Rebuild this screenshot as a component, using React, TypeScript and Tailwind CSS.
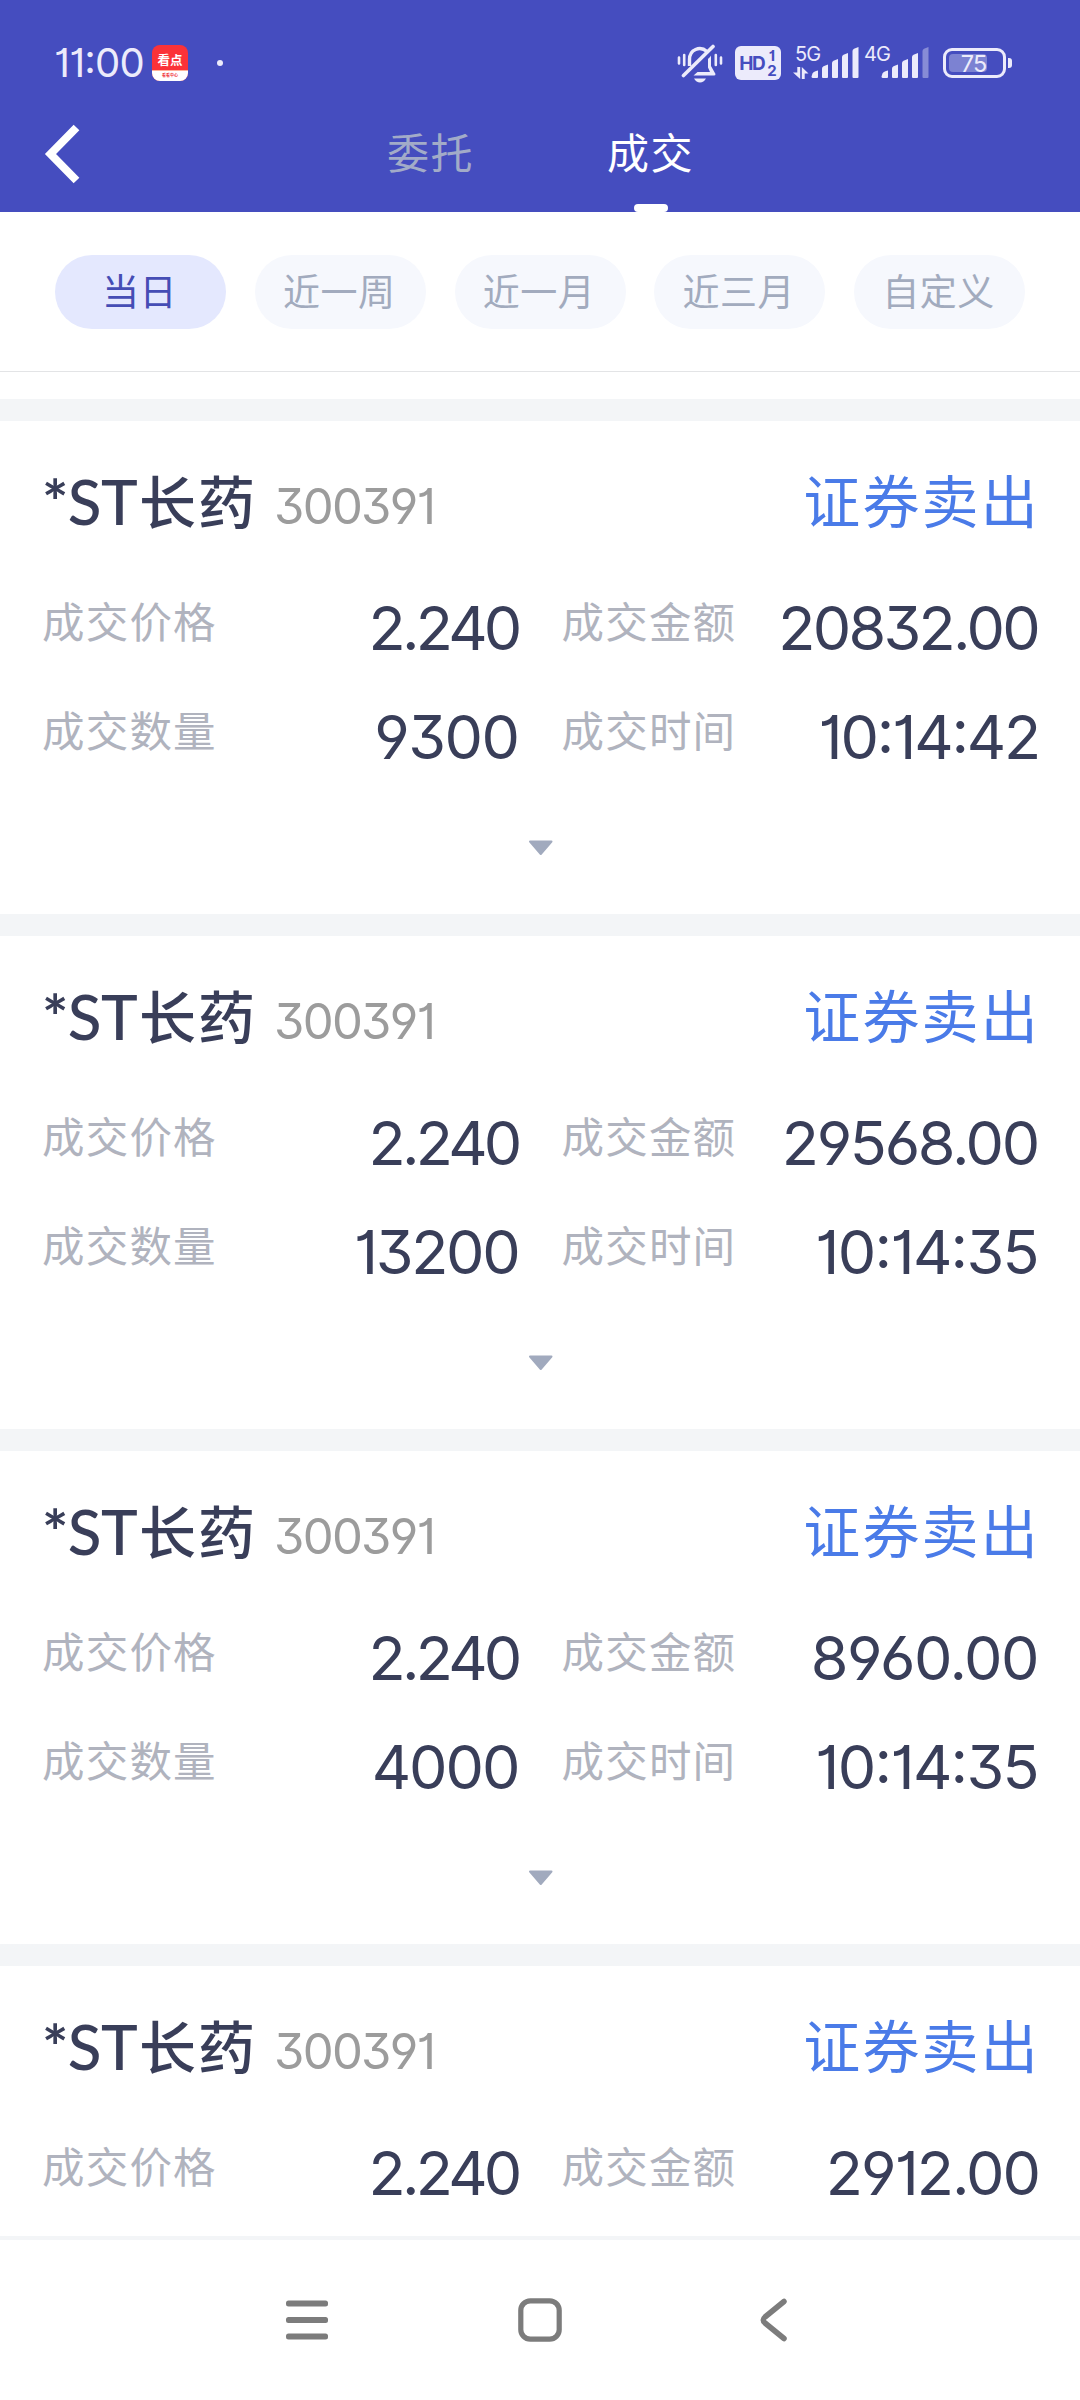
import React from "react";

const NUM =
  "font-['Inter','Noto_Sans_CJK_SC',sans-serif] [font-feature-settings:'cv01','cv03','cv04','cv09','calt']";

interface FieldData {
  label: string;
  value: string;
  tracking: string;
}

const price: FieldData = { label: "成交价格", value: "2.240", tracking: "tracking-[-3.800px] mr-[-1px]" };

const trades: FieldData[][] = [
  [
    price,
    { label: "成交金额", value: "20832.00", tracking: "tracking-[-2.700px] mr-[-1px]" },
    { label: "成交数量", value: "9300", tracking: "tracking-[-1.500px] mr-[-1px]" },
    { label: "成交时间", value: "10:14:42", tracking: "tracking-[-2.200px] mr-[-2px]" },
  ],
  [
    price,
    { label: "成交金额", value: "29568.00", tracking: "tracking-[-2.300px] mr-[-1px]" },
    { label: "成交数量", value: "13200", tracking: "tracking-[-2.300px] mr-[-1px]" },
    { label: "成交时间", value: "10:14:35", tracking: "tracking-[-1.700px] mr-[-1px]" },
  ],
  [
    price,
    { label: "成交金额", value: "8960.00", tracking: "tracking-[-1.500px] mr-[-1px]" },
    { label: "成交数量", value: "4000", tracking: "tracking-[-2px] mr-[-1px]" },
    { label: "成交时间", value: "10:14:35", tracking: "tracking-[-1.700px] mr-[-1px]" },
  ],
  [price, { label: "成交金额", value: "2912.00", tracking: "tracking-[-2px] mr-[-2px]" }],
];

const ranges = ["当日", "近一周", "近一月", "近三月", "自定义"];

function MutedBell() {
  return (
    <svg width="46" height="40" viewBox="0 0 46 40" fill="none" stroke="#ecebfb" className="block">
      <path d="M12.500 22V15.500C12.500 5.500 23 1.500 30 7.500" strokeWidth="3.400" />
      <path d="M31 15q2.500-2.500 3-3.500v10.500L38.500 30q0 1.600-1.500 1.600H16.500l4-3.600H33L31 23.500z" fill="#ecebfb" stroke="none" />
      <path d="M36 2.500L6.500 31.500" strokeWidth="3.600" strokeLinecap="round" />
      <path d="M17 34.500h12c-1.500 2.800-3.500 4-6 4s-4.500-1.200-6-4z" fill="#ecebfb" stroke="none" />
      <path d="M2 13.500v6M7.200 11v10M38.800 11v10M44 13.500v6" strokeWidth="2.600" strokeLinecap="round" />
    </svg>
  );
}

function Bars({ dim }: { dim?: boolean }) {
  return (
    <svg width="49" height="32" viewBox="0 0 49 32" fill="#ecebfb" className="block">
      <path d="M1.500 26.500q1-2 5.500-3V30q0 1-1 1H2q-1.500 0-1.500-1.500z" />
      <path d="M11 21.500q0-1.500 1.500-2.200L17 17.500V30q0 1-1 1h-4q-1 0-1-1z" />
      <path d="M21 16q0-1.500 1.500-2.200L27 12V30q0 1-1 1h-4q-1 0-1-1z" />
      <path d="M31 10q0-1.500 1.500-2.200L37 6V30q0 1-1 1h-4q-1 0-1-1z" />
      <path d="M41.500 4q0-1.500 1.500-2.200L47.500 0V30q0 1-1 1h-4q-1 0-1-1z" opacity={dim ? 0.4 : 1} />
    </svg>
  );
}

function StatusBar() {
  return (
    <div className="flex h-[102px] items-start pl-[54px] pr-[68px] pt-[42px] text-[#ecebfb]">
      <span className={`${NUM} mt-[1px] w-[98px] whitespace-nowrap text-[40px] leading-[40px] tracking-[-0.800px]`}>11:00</span>
      <div className="mt-[3px] flex h-[36px] w-[36px] flex-col overflow-hidden rounded-[8px] bg-[#fb3238]">
        <span className="h-[25px] pt-[8px] text-center font-['Noto_Sans_CJK_SC',sans-serif] text-[12.500px] font-bold leading-[14px] text-white">看点</span>
        <span className="h-[11px] border-t border-[#ffb199] bg-white text-center font-['Noto_Sans_CJK_SC',sans-serif] text-[4px] font-bold leading-[9px] text-[#f0353a]">看看中心</span>
      </div>
      <div className="ml-[29px] mt-[18px] h-[6px] w-[6px] rounded-full bg-[#ecebfb]" />
      <div className="ml-auto flex items-start">
        <div className="mt-[2px]">
          <MutedBell />
        </div>
        <div className={`${NUM} ml-[12px] mt-[4px] flex h-[34px] w-[46px] items-center justify-center gap-[3px] rounded-[6px] bg-[#ecebfb] font-bold text-[#454dbf]`}>
          <span className="text-[19px] leading-none tracking-[-1.500px]">HD</span>
          <span className="flex flex-col items-center text-[15px] leading-[15px]">
            <span>1</span>
            <span>2</span>
          </span>
        </div>
        <div className={`${NUM} relative ml-[13px] mt-[5px] h-[32px] w-[68px]`}>
          <span className="absolute left-[1px] top-[-4px] text-[20px] leading-[22px] tracking-[-1px]">5G</span>
          <svg width="17" height="12" viewBox="0 0 17 12" fill="#ecebfb" className="absolute left-[-1px] top-[20px]">
            <path d="M4.300 0H7.200V12L0 5.500H4.300z" />
            <path d="M8.800 12V0L15.500 6.500H11.700V12z" />
          </svg>
          <div className="absolute left-[17px] top-0">
            <Bars />
          </div>
        </div>
        <div className={`${NUM} relative ml-[3px] mt-[5px] h-[32px] w-[67px]`}>
          <span className="absolute left-[-1px] top-[-4px] text-[20px] leading-[22px] tracking-[-1px]">4G</span>
          <div className="absolute left-[16px] top-0">
            <Bars dim />
          </div>
        </div>
        <div className="relative ml-[11px] mt-[6px] flex h-[30px] w-[63px] items-center justify-center rounded-[9px] border-[3px] border-[#ecebfb]">
          <div className="absolute left-[3px] top-[3px] h-[18px] w-[38px] rounded-[4px] bg-[#7c82d2]" />
          <span className={`${NUM} relative mr-[2px] mt-px text-[23.500px] leading-none tracking-[-1px]`}>75</span>
        </div>
        <div className="ml-[2px] mt-[16px] h-[10px] w-[4px] rounded-r-[3px] bg-[#ecebfb]" />
      </div>
    </div>
  );
}

function Tabs() {
  return (
    <div className="flex h-[110px] items-start text-[42px] leading-[60px] tracking-[1.500px]">
      <svg width="40" height="64" viewBox="0 0 40 64" fill="none" stroke="#fff" strokeWidth="8" className="ml-[43px] mt-[20px]">
        <path d="M33.500 5.500L7.500 32L33.500 58.500" />
      </svg>
      <span className="ml-[304px] mt-[19px] text-[#a2abc8]">委托</span>
      <div className="ml-[133px] flex h-full flex-col items-center pt-[19px] text-white">
        <span>成交</span>
        <div className="mt-auto h-[8px] w-[34px] rounded-[4px] bg-white" />
      </div>
    </div>
  );
}

function Ranges() {
  return (
    <div className="flex h-[160px] justify-between border-b border-[#e3e4e6] bg-white pl-[55px] pr-[55px] pt-[43px]">
      {ranges.map((r, i) => (
        <div
          key={r}
          className={
            "flex h-[74px] w-[171px] items-center justify-center rounded-full pb-[3px] pr-[2px] text-[37px] tracking-[0.500px] " +
            (i === 0 ? "bg-[#e4e8fe] text-[#454db5]" : "bg-[#f6f8fd] text-[#a2abbe]")
          }
        >
          {r}
        </div>
      ))}
    </div>
  );
}

function Field({ label, value, tracking }: FieldData) {
  return (
    <div className="flex h-[109px] items-start justify-between">
      <span className="text-[42.500px] leading-[60px] tracking-[1.200px] text-[#b0b3be]">{label}</span>
      <span className={`${NUM} ${tracking} mt-[8px] text-[61px] leading-[60px] text-[#393e59]`}>{value}</span>
    </div>
  );
}

function TradeCard({ fields }: { fields: FieldData[] }) {
  return (
    <section className="h-[515px] shrink-0 border-t-[22px] border-[#f3f5f7] bg-white pl-[42px] pr-[43px]">
      <div className="flex h-[169px] items-start pt-[50px] leading-[60px]">
        <h2 className="flex font-medium text-[#393e59]">
          <span className="w-[97px] whitespace-nowrap font-['Lato',sans-serif] text-[62px] tracking-[-0.500px]">
            <span className="font-bold">*</span>ST
          </span>
          <span className="mt-[-2px] text-[57px] tracking-[2px]">长药</span>
        </h2>
        <span className={`${NUM} ml-[17px] mt-[6px] text-[49px] tracking-[-1.700px] text-[#9c9c9c]`}>300391</span>
        <span className="ml-auto mr-[-3px] mt-[-3px] text-[57px] tracking-[2.200px] text-[#4a7be8]">证券卖出</span>
      </div>
      <div className="grid grid-cols-2 gap-x-[44px]">
        {fields.map((f) => (
          <Field key={f.label} {...f} />
        ))}
      </div>
      <svg width="28" height="18" viewBox="0 0 28 18" className="mx-auto mt-[31px] block">
        <path d="M4 2.500H25.500L14.750 15z" fill="#a1aabe" stroke="#a1aabe" strokeWidth="2" strokeLinejoin="round" />
      </svg>
    </section>
  );
}

function NavBar() {
  return (
    <nav className="flex h-[164px] shrink-0 items-start border-t-4 border-[#f3f5f7] bg-white pt-[54px]">
      <svg width="52" height="52" viewBox="0 0 52 52" fill="#7c7c7c" className="ml-[281px]">
        <rect x="5" y="6.500" width="42" height="6" rx="2.500" />
        <rect x="5" y="23" width="42" height="6" rx="2.500" />
        <rect x="5" y="39.500" width="42" height="6" rx="2.500" />
      </svg>
      <svg width="52" height="52" viewBox="0 0 52 52" fill="none" stroke="#7c7c7c" strokeWidth="5.200" className="ml-[181px]">
        <rect x="6.800" y="6.800" width="38.400" height="38.400" rx="9.500" />
      </svg>
      <svg width="52" height="52" viewBox="0 0 52 52" fill="none" stroke="#7c7c7c" strokeWidth="5.500" strokeLinecap="round" strokeLinejoin="round" className="ml-[181px]">
        <path d="M37 7.500L18 23Q14.500 26 18 29L37 44.500" />
      </svg>
    </nav>
  );
}

export default function App() {
  return (
    <div className="flex h-[2400px] w-[1080px] flex-col overflow-hidden bg-white font-['Noto_Sans_CJK_SC',sans-serif]">
      <header className="h-[212px] shrink-0 bg-[#454dbf]">
        <StatusBar />
        <Tabs />
      </header>
      <Ranges />
      <main className="flex h-[1864px] flex-col overflow-hidden pt-[27px]">
        {trades.map((fields, i) => (
          <TradeCard key={i} fields={fields} />
        ))}
      </main>
      <NavBar />
    </div>
  );
}
